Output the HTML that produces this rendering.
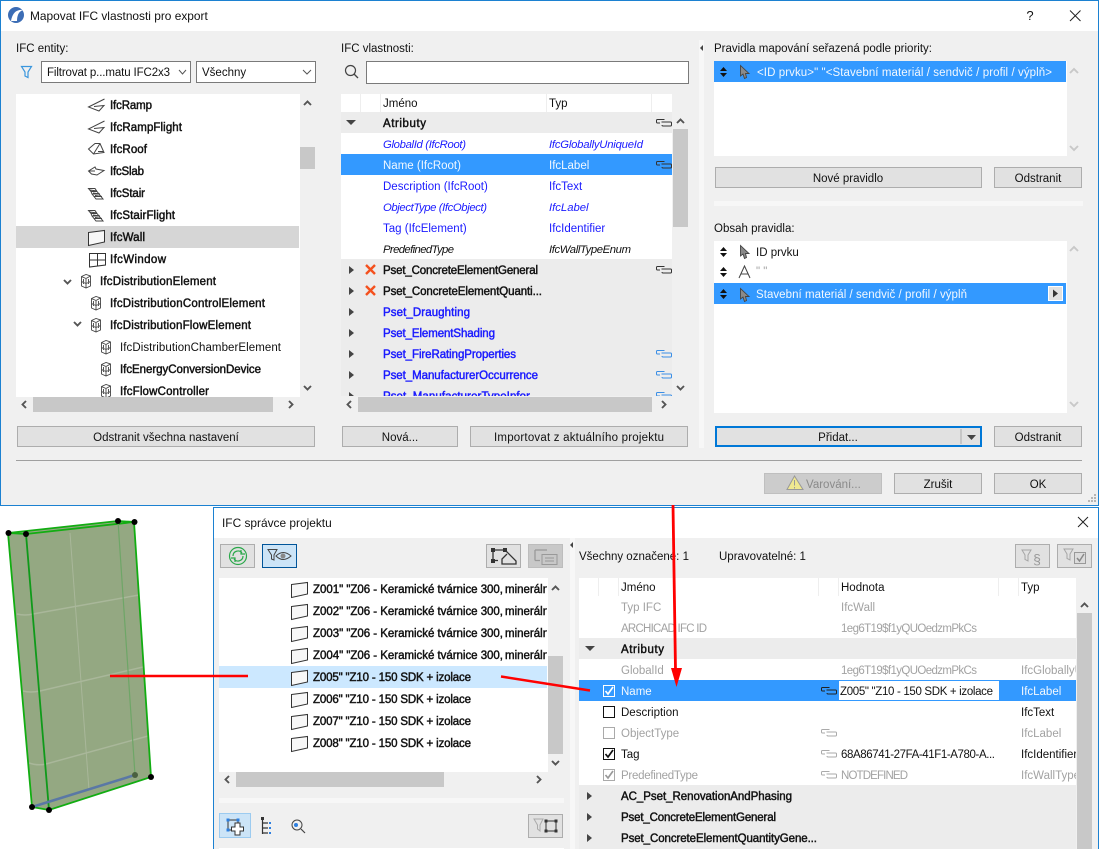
<!DOCTYPE html>
<html><head><meta charset="utf-8"><title>Mapovat IFC</title>
<style>
html,body{margin:0;padding:0;background:#fff;width:1099px;height:849px;overflow:hidden}
svg{display:block}
text{font-family:"Liberation Sans",sans-serif;font-size:11.5px;fill:#111;white-space:pre}
.b{stroke:#111;stroke-width:.45}
.b .u{stroke:#1a1aff}
.i{font-style:italic;font-size:11.3px}
.u{fill:#1a1aff}
.w{fill:#f2f8ff}
.g{fill:#a2a2a2}
.c{text-anchor:middle}
.btn{fill:#e1e1e1;stroke:#adadad}
.arr{fill:none;stroke:#555;stroke-width:1.9}
.arrl{fill:none;stroke:#c8c8c8;stroke-width:1.9}
</style></head><body>
<svg width="1099" height="849" viewBox="0 0 1099 849" xmlns="http://www.w3.org/2000/svg">
<defs>
<symbol id="ramp" width="18" height="16" overflow="visible"><path d="M16.500 2 L.5 10 L11 14 L16 8.500 L6 9.500" fill="none" stroke="#444"/></symbol>
<symbol id="roof" width="18" height="16" overflow="visible"><path d="M.5 8 L7 2.500 H12 L16 11.500 L5.500 13 Z M12 2.500 L5.500 13 M10 10.500 H15" fill="none" stroke="#444"/></symbol>
<symbol id="slab" width="18" height="16" overflow="visible"><path d="M.5 8 L7 4 L8 6 L16 7.500 L9 12 L3.500 11 Z M.5 8 H7" fill="none" stroke="#444"/></symbol>
<symbol id="stair" width="18" height="16" overflow="visible"><path d="M.5 3.500 H7 L9 6.500 H3 Z M3 6.500 L4 9 H11 L9 6.500 M4 9 L6 11.500 H13 L11 9 M6 11.500 L8 14 H15 L13 11.500 M2 5 L9 6 M5 8 L12 9 M7 10.500 L14 11.500" fill="none" stroke="#444"/></symbol>
<symbol id="wall" width="18" height="17" overflow="visible"><path d="M.5 3.500 L16.500 1.500 V13 L.5 16.500 Z" fill="#f7f7f7" stroke="#333"/></symbol>
<symbol id="win" width="18" height="17" overflow="visible"><path d="M.5 2.500 H16.500 V14 L.5 16 Z M8.500 2.500 V15 M.5 9 H16.500" fill="none" stroke="#333"/></symbol>
<symbol id="box" width="12" height="16" overflow="visible"><path d="M.5 2.500 L5 .5 L9.500 2 V12 L5 14 L.5 12 Z M.5 2.500 L5 4.500 L9.500 2 M5 4.500 V14 M2.500 5 V10 M7.500 5 V10 M.5 7.500 L5 9.500 L9.500 7.500" fill="none" stroke="#444" stroke-width=".9"/></symbol>
<symbol id="lnk" width="16" height="8" overflow="visible"><path d="M8.500 .5 H1.500 Q.5 .5 .5 1.500 V3 Q.5 4 1.500 4 H4 M5.500 3 H14.500 Q15.500 3 15.500 4 V6 Q15.500 7 14.500 7 H7 Q6 7 6 6" fill="none" stroke="currentColor" stroke-width="1"/></symbol>
<symbol id="cur" width="11" height="14" overflow="visible"><path d="M.5 .5 V11 L3 9 L4.500 13.500 L6.500 12.500 L5.500 8.500 H9 Z" fill="#8a8a8a" stroke="#444" stroke-width=".9"/></symbol>
<symbol id="ud" width="8" height="10" overflow="visible"><path d="M0 4 L3.500 0 L7 4 Z M0 6 H7 L3.500 10 Z" fill="#111"/></symbol>
<symbol id="tr" width="6" height="8" overflow="visible"><path d="M0 0 L5 4 L0 8 Z" fill="#444"/></symbol>
<symbol id="x" width="12" height="12" overflow="visible"><path d="M1 1 L10 10 M10 1 L1 10" stroke="#f4511e" stroke-width="2.400" fill="none"/></symbol>
<clipPath id="cL"><rect x="16" y="94" width="284" height="303"/></clipPath>
<clipPath id="cM"><rect x="341" y="94" width="331" height="302"/></clipPath>
<clipPath id="cZ"><rect x="219" y="578" width="328" height="194"/></clipPath>
<clipPath id="cT"><rect x="579" y="578" width="497" height="271"/></clipPath>
</defs>

<!-- top dialog -->
<rect x="0" y="0" width="1099" height="506" fill="#f0f0f0"/>
<rect x="1" y="1" width="1097" height="30" fill="#fff"/>
<rect x=".5" y=".5" width="1098" height="505" fill="none" stroke="#1c81d1"/>
<circle cx="16" cy="15" r="8" fill="#3c6db5"/><path d="M11 21 Q13 9 23 10 Q17 12 17 21 Z" fill="#fff"/>
<text x="30" y="20" style="font-size:11.900px" fill="#333">Mapovat IFC vlastnosti pro export</text>
<text x="1030" y="20" class="c" style="font-size:13px">?</text>
<path d="M1070 10.500 L1080.500 21 M1080.500 10.500 L1070 21" stroke="#222" fill="none"/>

<text x="16" y="52">IFC entity:</text>
<path d="M21.500 66.500 H31.500 L28 72 V77.500 L25 76 V72 Z" fill="none" stroke="#3a96dd" stroke-width="1.200"/>
<rect x="41.500" y="61.500" width="149" height="21" fill="#fff" stroke="#7a7a7a"/>
<text x="47" y="76" textLength="123">Filtrovat p...matu IFC2x3</text>
<path d="M179 70 L182.500 74 L186 70" fill="none" stroke="#555"/>
<rect x="196.500" y="61.500" width="119" height="21" fill="#fff" stroke="#7a7a7a"/>
<text x="202" y="76">Všechny</text>
<path d="M303 70 L307 74 L311 70" fill="none" stroke="#555"/>

<!-- left tree -->
<rect x="16" y="94" width="284" height="303" fill="#fff"/>
<rect x="16" y="226" width="283" height="22" fill="#d6d6d6"/>
<g clip-path="url(#cL)">
<use href="#ramp" x="88" y="97"/><use href="#ramp" x="88" y="119"/><use href="#roof" x="88" y="141"/><use href="#slab" x="88" y="163"/><use href="#stair" x="88" y="185"/><use href="#stair" x="88" y="207"/><use href="#wall" x="88" y="229"/><use href="#win" x="89" y="251"/>
<use href="#box" x="81" y="274"/><use href="#box" x="91" y="296"/><use href="#box" x="91" y="318"/><use href="#box" x="101" y="340"/><use href="#box" x="101" y="362"/><use href="#box" x="101" y="384"/>
<path d="M64 280 L67.500 283.500 L71 280 M74 322 L77.500 325.500 L81 322" class="arr"/>
<g class="b">
<text x="110" y="109" textLength="42">IfcRamp</text><text x="110" y="131" textLength="72">IfcRampFlight</text><text x="110" y="153" textLength="37">IfcRoof</text><text x="110" y="175" textLength="34">IfcSlab</text><text x="110" y="197" textLength="35">IfcStair</text><text x="110" y="219" textLength="65">IfcStairFlight</text><text x="110" y="241" textLength="35">IfcWall</text><text x="110" y="263" textLength="56">IfcWindow</text>
<text x="100" y="285" textLength="116">IfcDistributionElement</text><text x="110" y="307" textLength="155">IfcDistributionControlElement</text><text x="110" y="329" textLength="141">IfcDistributionFlowElement</text>
<text x="120" y="373" textLength="141">IfcEnergyConversionDevice</text><text x="120" y="395" textLength="89">IfcFlowController</text>
</g>
<text x="120" y="351" textLength="161">IfcDistributionChamberElement</text>
</g>
<rect x="300" y="147" width="15" height="22" fill="#c8c8c8"/>
<path d="M304 105 L307.500 101.500 L311 105 M304 386 L307.500 389.500 L311 386" class="arr"/>
<rect x="33" y="397" width="240" height="15" fill="#c8c8c8"/>
<path d="M26 401 L22.500 404.500 L26 408 M289 401 L292.500 404.500 L289 408" class="arr"/>
<rect class="btn" x="17.500" y="426.500" width="297" height="20"/>
<text x="166" y="441" class="c">Odstranit všechna nastavení</text>

<!-- middle -->
<text x="341" y="52">IFC vlastnosti:</text>
<circle cx="350.500" cy="70.500" r="5" fill="none" stroke="#444" stroke-width="1.200"/><path d="M354 74 L358 78" stroke="#444" stroke-width="1.300"/>
<rect x="366.500" y="61.500" width="322" height="22" fill="#fff" stroke="#7a7a7a"/>
<rect x="341" y="94" width="331" height="302" fill="#fff"/>
<rect x="341" y="112" width="331" height="21" fill="#ececec"/>
<rect x="341" y="154" width="331" height="21" fill="#3399ff"/>
<rect x="341" y="259" width="331" height="137" fill="#ececec"/>
<path d="M360.500 94 V112 M380.500 94 V112 M546.500 94 V112 M651.500 94 V112" stroke="#eeeeee"/>
<text x="383" y="107">Jméno</text><text x="549" y="107">Typ</text>
<g clip-path="url(#cM)">
<path d="M346 120 H356 L351 125 Z" fill="#444"/>
<text x="383" y="127" class="b" textLength="43">Atributy</text>
<text x="383" y="148" class="i u" textLength="83">GlobalId (IfcRoot)</text><text x="549" y="148" class="i u" textLength="94">IfcGloballyUniqueId</text>
<text x="383" y="169" class="w">Name (IfcRoot)</text><text x="549" y="169" class="w">IfcLabel</text>
<text x="383" y="190" class="u">Description (IfcRoot)</text><text x="549" y="190" class="u">IfcText</text>
<text x="383" y="211" class="i u" textLength="104">ObjectType (IfcObject)</text><text x="549" y="211" class="i u">IfcLabel</text>
<text x="383" y="232" class="u">Tag (IfcElement)</text><text x="549" y="232" class="u">IfcIdentifier</text>
<text x="383" y="253" class="i" textLength="71">PredefinedType</text><text x="549" y="253" class="i" textLength="82">IfcWallTypeEnum</text>
<g class="b">
<text x="383" y="274" textLength="155">Pset_ConcreteElementGeneral</text>
<text x="383" y="295" textLength="159">Pset_ConcreteElementQuanti...</text>
<text x="383" y="316" class="u" textLength="87">Pset_Draughting</text>
<text x="383" y="337" class="u" textLength="112">Pset_ElementShading</text>
<text x="383" y="358" class="u" textLength="133">Pset_FireRatingProperties</text>
<text x="383" y="379" class="u" textLength="155">Pset_ManufacturerOccurrence</text>
<text x="383" y="400" class="u" textLength="147">Pset_ManufacturerTypeInfor</text>
</g>
<use href="#tr" x="349" y="266"/><use href="#tr" x="349" y="287"/><use href="#tr" x="349" y="308"/><use href="#tr" x="349" y="329"/><use href="#tr" x="349" y="350"/><use href="#tr" x="349" y="371"/><use href="#tr" x="349" y="392"/>
<use href="#x" x="365" y="264"/><use href="#x" x="365" y="285"/>
<g color="#333"><use href="#lnk" x="656" y="119"/><use href="#lnk" x="656" y="161"/><use href="#lnk" x="656" y="266"/></g>
<g color="#3a8ee6"><use href="#lnk" x="656" y="350"/><use href="#lnk" x="656" y="371"/><use href="#lnk" x="656" y="392"/></g>
</g>
<rect x="673" y="129" width="15" height="98" fill="#c8c8c8"/>
<path d="M677 123 L680.500 119.500 L684 123 M677 386 L680.500 389.500 L684 386" class="arr"/>
<rect x="358" y="397" width="294" height="15" fill="#c8c8c8"/>
<path d="M351 401 L347.500 404.500 L351 408 M662 401 L665.500 404.500 L662 408" class="arr"/>
<rect class="btn" x="342.500" y="426.500" width="115" height="20"/><text x="400" y="441" class="c">Nová...</text>
<rect class="btn" x="470.500" y="426.500" width="217" height="20"/><text x="494" y="441" textLength="170">Importovat z aktuálního projektu</text>

<!-- splitter + right -->
<rect x="699" y="40" width="5" height="408" fill="#f7f7f7"/>
<path d="M700 48 L703 45 V51 Z" fill="#444"/>
<text x="714" y="52">Pravidla mapování seřazená podle priority:</text>
<rect x="714" y="61" width="353" height="95" fill="#fff"/>
<rect x="714" y="61" width="352" height="21" fill="#3399ff"/>
<use href="#ud" x="720" y="67"/><use href="#cur" x="740" y="65"/>
<text x="757" y="76" class="w" textLength="295">&lt;ID prvku&gt;" "&lt;Stavební materiál / sendvič / profil / výplň&gt;</text>
<path d="M1070 73 L1074 69 L1078 73 M1070 146 L1074 150 L1078 146" class="arrl"/>
<rect class="btn" x="715.500" y="167.500" width="266" height="20"/><text x="848" y="182" class="c">Nové pravidlo</text>
<rect class="btn" x="994.500" y="167.500" width="87" height="20"/><text x="1038" y="182" class="c">Odstranit</text>
<rect x="714" y="201" width="369" height="5" fill="#f7f7f7"/>
<text x="714" y="232">Obsah pravidla:</text>
<rect x="714" y="241" width="353" height="172" fill="#fff"/>
<rect x="714" y="283" width="352" height="21" fill="#3399ff"/>
<use href="#ud" x="720" y="247"/><use href="#cur" x="740" y="245"/><text x="756" y="256">ID prvku</text>
<use href="#ud" x="720" y="267"/><path d="M739 278 L744.500 266 L750 278 M741 274 H748" fill="none" stroke="#444"/><text x="756" y="275" class="g">" "</text>
<use href="#ud" x="720" y="289"/><use href="#cur" x="740" y="288"/><text x="756" y="298" class="w" textLength="211">Stavební materiál / sendvič / profil / výplň</text>
<rect x="1048.500" y="286.500" width="14" height="14" fill="#e1e1e1" stroke="#fff"/><path d="M1053 289.500 L1058 293.500 L1053 297.500 Z" fill="#333"/>
<path d="M1070 251 L1074 247 L1078 251 M1070 402 L1074 406 L1078 402" class="arrl"/>
<rect x="716" y="427" width="265" height="19" fill="#e1e1e1" stroke="#0078d7" stroke-width="2"/>
<path d="M961 429 V444" stroke="#aaa"/><path d="M967 435 H976 L971.500 440 Z" fill="#444"/>
<text x="838" y="441" class="c">Přidat...</text>
<rect class="btn" x="994.500" y="426.500" width="87" height="20"/><text x="1038" y="441" class="c">Odstranit</text>

<rect x="16" y="460" width="1066" height="1" fill="#a0a0a0"/>
<rect x="764.500" y="473.500" width="117" height="20" fill="#cccccc" stroke="#bfbfbf"/>
<path d="M794.500 476 L787 489.500 H803 Z" fill="#f0e890" stroke="#999"/><path d="M794.500 480 V485.500 M794.500 487 V488.500" stroke="#999"/>
<text x="806" y="488" style="fill:#8a8a8a">Varování...</text>
<rect class="btn" x="894.500" y="473.500" width="87" height="20"/><text x="938" y="488" class="c">Zrušit</text>
<rect class="btn" x="994.500" y="473.500" width="87" height="20"/><text x="1038" y="488" class="c">OK</text>
<path d="M1091 497h2v2h-2zM1094 497h2v2h-2zM1094 494h2v2h-2zM1088 500h2v2h-2zM1091 500h2v2h-2zM1094 500h2v2h-2z" fill="#b5b5b5"/>

<!-- wall -->
<path d="M8 533 L118 521 L134 522 L151 777 L49 810 L32 807 Z" fill="#94a882"/>
<path d="M17 614 Q25 616 33 614 L139 595 M23 691 Q30 693 40 691 L143 667 M29 763 Q38 766 46 764 L148 736" stroke="#a9b79a" stroke-width="1.500" fill="none"/>
<path d="M70 533 L89 790" stroke="#a9b79a" fill="none"/>
<path d="M8 533 L26 534 L134 522 M8 533 L118 521 L134 522 L151 777 L49 810 L32 807 Z" stroke="#12ad12" stroke-width="1.800" fill="none"/>
<path d="M26 534 L49 810" stroke="#0f9a1a" stroke-width="1.800" fill="none"/>
<path d="M118 521 L135 775" stroke="#6ea667" stroke-width="1.200" fill="none"/>
<path d="M32 807 L135 775" stroke="#5a78a5" stroke-width="2.500" fill="none"/>
<circle cx="135" cy="775" r="3" fill="#4a6040"/>
<g fill="#000"><circle cx="8.500" cy="533" r="3"/><circle cx="26" cy="534" r="3"/><circle cx="118" cy="521" r="3"/><circle cx="134.500" cy="522" r="3"/><circle cx="151" cy="777" r="3"/><circle cx="49" cy="810" r="3"/><circle cx="32" cy="807" r="3"/></g>

<!-- bottom dialog -->
<rect x="213" y="507" width="886" height="342" fill="#f0f0f0"/>
<rect x="214" y="508" width="885" height="30" fill="#fff"/>
<path d="M213.500 849 V507.500 H1098.500 V849" fill="none" stroke="#1c81d1"/>
<text x="222" y="527" style="font-size:11.900px">IFC správce projektu</text>
<path d="M1078 517 L1088 527 M1088 517 L1078 527" stroke="#222" fill="none"/>

<rect class="btn" x="220.500" y="544.500" width="34" height="23"/>
<circle cx="238" cy="556" r="8.500" fill="none" stroke="#2aa84a" stroke-width="1.200"/><path d="M233 556 A5 5 0 0 1 242 553 M243 556 A5 5 0 0 1 234 559 M241 550 V554 H245 M235 562 V558 H231" fill="none" stroke="#2aa84a" stroke-width="1.200"/>
<rect x="262.500" y="544.500" width="34" height="23" fill="#cce4f7" stroke="#005499"/>
<path d="M268 549.500 H277 L274 555 V560 L271.500 559 V555 Z" fill="none" stroke="#444"/><path d="M276 556 Q283 549 291 556 Q283 563 276 556 Z" fill="none" stroke="#444"/><circle cx="283" cy="556" r="2.500" fill="#888"/>
<rect class="btn" x="486.500" y="544.500" width="34" height="23"/>
<path d="M493 550 V560.500 M493 550 H505 M493 560.500 H498 M505 550 L516 561 V564 H502 V559 L507 554" fill="none" stroke="#333" stroke-width="1.300"/><rect x="491" y="548" width="4" height="4" fill="#333"/><rect x="503" y="548" width="4" height="4" fill="#333"/><rect x="491" y="559" width="4" height="4" fill="#333"/>
<rect x="528.500" y="544.500" width="34" height="23" fill="#c8c8c8" stroke="#bdbdbd"/>
<path d="M535 550 V560.500 M535 550 H547 M535 560.500 H540" fill="none" stroke="#999" stroke-width="1.300"/><rect x="542" y="554.500" width="15" height="10" fill="none" stroke="#999"/><path d="M545 558 H554 M545 561 H554" stroke="#999"/>

<rect x="219" y="578" width="329" height="194" fill="#fff"/>
<rect x="219" y="666" width="328" height="22" fill="#cce8ff"/>
<g clip-path="url(#cZ)">
<use href="#wall" x="291" y="581"/><use href="#wall" x="291" y="603"/><use href="#wall" x="291" y="625"/><use href="#wall" x="291" y="647"/><use href="#wall" x="291" y="669"/><use href="#wall" x="291" y="691"/><use href="#wall" x="291" y="713"/><use href="#wall" x="291" y="735"/>
<g class="b">
<text x="313" y="593" textLength="190">Z001" "Z06 - Keramické tvárnice 300,</text><text x="505" y="593">minerální</text>
<text x="313" y="615" textLength="190">Z002" "Z06 - Keramické tvárnice 300,</text><text x="505" y="615">minerální</text>
<text x="313" y="637" textLength="190">Z003" "Z06 - Keramické tvárnice 300,</text><text x="505" y="637">minerální</text>
<text x="313" y="659" textLength="190">Z004" "Z06 - Keramické tvárnice 300,</text><text x="505" y="659">minerální</text>
<text x="313" y="681" textLength="158">Z005" "Z10 - 150 SDK + izolace</text>
<text x="313" y="703" textLength="158">Z006" "Z10 - 150 SDK + izolace</text>
<text x="313" y="725" textLength="158">Z007" "Z10 - 150 SDK + izolace</text>
<text x="313" y="747" textLength="158">Z008" "Z10 - 150 SDK + izolace</text>
</g>
</g>
<rect x="548" y="656" width="15" height="98" fill="#c8c8c8"/>
<path d="M552 590 L555.500 586.500 L559 590 M552 761 L555.500 764.500 L559 761" class="arr"/>
<rect x="236" y="772" width="208" height="15" fill="#c8c8c8"/>
<path d="M229 776 L225.500 779.500 L229 783 M537 776 L540.500 779.500 L537 783" class="arr"/>
<rect x="219" y="798" width="345" height="5" fill="#f7f7f7"/>
<rect x="219.500" y="813.500" width="31" height="24" fill="#cce4f7" stroke="#9ccbf0"/>
<path d="M228 820 H238 V824 M228 820 V830 H231" fill="none" stroke="#333"/><rect x="226.500" y="818.500" width="3" height="3" fill="#2d7fe0"/><rect x="236.500" y="818.500" width="3" height="3" fill="#2d7fe0"/><rect x="226.500" y="828.500" width="3" height="3" fill="#2d7fe0"/>
<path d="M235 823 H240 V827 H243.500 V831 H240 V835 H235 V831 H231.500 V827 H235 Z" fill="#fff" stroke="#333"/>
<path d="M262.500 819 V834 M262.500 823 H268 M262.500 828 H268 M262.500 833 H268" fill="none" stroke="#333" stroke-width="1.200"/><rect x="261" y="817" width="3" height="3" fill="#333"/><rect x="269" y="822" width="2" height="2" fill="#2d7fe0"/><rect x="269" y="827" width="2" height="2" fill="#2d7fe0"/><rect x="269" y="832" width="2" height="2" fill="#2d7fe0"/>
<circle cx="297" cy="825" r="5" fill="none" stroke="#444"/><circle cx="296" cy="825" r="2" fill="#2d7fe0"/><path d="M301 829 L305 833" stroke="#444" stroke-width="1.200"/>
<rect class="btn" x="528.500" y="814.500" width="34" height="23"/>
<path d="M534 819 H543 L540 825 V831 L537.500 829 V825 Z" fill="none" stroke="#aaa"/>
<path d="M546 821 H556 V831 H546 Z" fill="none" stroke="#333"/><rect x="544.500" y="819.500" width="3" height="3" fill="#333"/><rect x="554.500" y="819.500" width="3" height="3" fill="#333"/><rect x="544.500" y="829.500" width="3" height="3" fill="#333"/><rect x="554.500" y="829.500" width="3" height="3" fill="#333"/>
<rect x="219" y="848" width="345" height="1" fill="#fff"/>

<rect x="570" y="538" width="5" height="311" fill="#f7f7f7"/>
<path d="M570 545 L573 542 V548 Z" fill="#444"/>

<text x="579" y="560">Všechny označené: 1</text><text x="719" y="560">Upravovatelné: 1</text>
<rect x="1015.500" y="544.500" width="34" height="23" fill="#e1e1e1" stroke="#adadad"/>
<path d="M1022 550 H1031 L1028 555 V561 L1025 559.500 V555 Z" fill="none" stroke="#a5a5a5"/><text x="1037" y="564" class="c" style="font-size:14px;fill:#999">§</text>
<rect x="1057.500" y="544.500" width="34" height="23" fill="#e1e1e1" stroke="#adadad"/>
<path d="M1064 549 H1073 L1070 554 V560 L1067 558.500 V554 Z" fill="none" stroke="#a5a5a5"/><rect x="1074.500" y="552.500" width="11" height="11" fill="#dcdcdc" stroke="#999"/><path d="M1077 558 L1079.500 561 L1084 554" fill="none" stroke="#888" stroke-width="1.500"/>

<rect x="579" y="578" width="497" height="271" fill="#fff"/>
<rect x="579" y="638" width="497" height="21" fill="#ececec"/>
<rect x="579" y="680" width="497" height="21" fill="#3399ff"/>
<rect x="579" y="785" width="497" height="64" fill="#ececec"/>
<path d="M598.500 578 V596 M618.500 578 V596 M818.500 578 V596 M838.500 578 V596 M998.500 578 V596 M1018.500 578 V596" stroke="#eeeeee"/>
<g clip-path="url(#cT)">
<text x="621" y="591">Jméno</text><text x="841" y="591">Hodnota</text><text x="1021" y="591">Typ</text>
<text x="621" y="611" class="g">Typ IFC</text><text x="841" y="611" class="g">IfcWall</text>
<text x="621" y="632" class="g" textLength="86">ARCHICAD IFC ID</text><text x="841" y="632" class="g" textLength="136">1eg6T19$f1yQUOedzmPkCs</text>
<path d="M585 646 H595 L590 651 Z" fill="#444"/>
<text x="621" y="653" class="b" textLength="43">Atributy</text>
<text x="621" y="674" class="g">GlobalId</text><text x="841" y="674" class="g" textLength="136">1eg6T19$f1yQUOedzmPkCs</text><text x="1021" y="674" class="g">IfcGloballyUniqueId</text>
<text x="621" y="695" class="w">Name</text><text x="1021" y="695" class="w">IfcLabel</text>
<rect x="839" y="681" width="160" height="19" fill="#fff"/><text x="840" y="695" textLength="153">Z005" "Z10 - 150 SDK + izolace</text>
<text x="621" y="716">Description</text><text x="1021" y="716">IfcText</text>
<text x="621" y="737" class="g">ObjectType</text><text x="1021" y="737" class="g">IfcLabel</text>
<text x="621" y="758">Tag</text><text x="841" y="758" textLength="154">68A86741-27FA-41F1-A780-A...</text><text x="1021" y="758">IfcIdentifier</text>
<text x="621" y="779" class="g" textLength="77">PredefinedType</text><text x="841" y="779" class="g" textLength="67">NOTDEFINED</text><text x="1021" y="779" class="g">IfcWallTypeEnum</text>
<rect x="1076" y="578" width="1" height="271" fill="#fff"/>
<g class="b">
<text x="621" y="800" textLength="171">AC_Pset_RenovationAndPhasing</text>
<text x="621" y="821" textLength="155">Pset_ConcreteElementGeneral</text>
<text x="621" y="842" textLength="196">Pset_ConcreteElementQuantityGene...</text>
</g>
<use href="#tr" x="587" y="792"/><use href="#tr" x="587" y="813"/><use href="#tr" x="587" y="834"/>
<g color="#222"><use href="#lnk" x="821" y="687"/></g>
<g color="#aaa"><use href="#lnk" x="821" y="729"/><use href="#lnk" x="821" y="750"/><use href="#lnk" x="821" y="771"/></g>
</g>
<rect x="603.500" y="685.500" width="11" height="11" fill="#3399ff" stroke="#fff"/><path d="M605.500 691 L608 694 L613 687" fill="none" stroke="#fff" stroke-width="1.700"/>
<rect x="603.500" y="706.500" width="11" height="11" fill="#fff" stroke="#111"/>
<rect x="603.500" y="727.500" width="11" height="11" fill="#fff" stroke="#aaa"/>
<rect x="603.500" y="748.500" width="11" height="11" fill="#fff" stroke="#111"/><path d="M605.500 754 L608 757 L613 750" fill="none" stroke="#111" stroke-width="1.700"/>
<rect x="603.500" y="769.500" width="11" height="11" fill="#fff" stroke="#aaa"/><path d="M605.500 775 L608 778 L613 771" fill="none" stroke="#999" stroke-width="1.700"/>
<rect x="1077" y="613" width="15" height="236" fill="#c8c8c8"/>
<path d="M1081 607 L1084.500 603.500 L1088 607" class="arr"/>

<!-- red annotations -->
<path d="M110 676 H248" stroke="#f00" stroke-width="2.500"/>
<path d="M501 676.500 L590 690.500" stroke="#f00" stroke-width="2.500"/>
<path d="M673 505 L675.500 670" stroke="#f00" stroke-width="2.800"/>
<path d="M671 668 L682 668 L676.500 687 Z" fill="#f00"/>
</svg>
</body></html>
